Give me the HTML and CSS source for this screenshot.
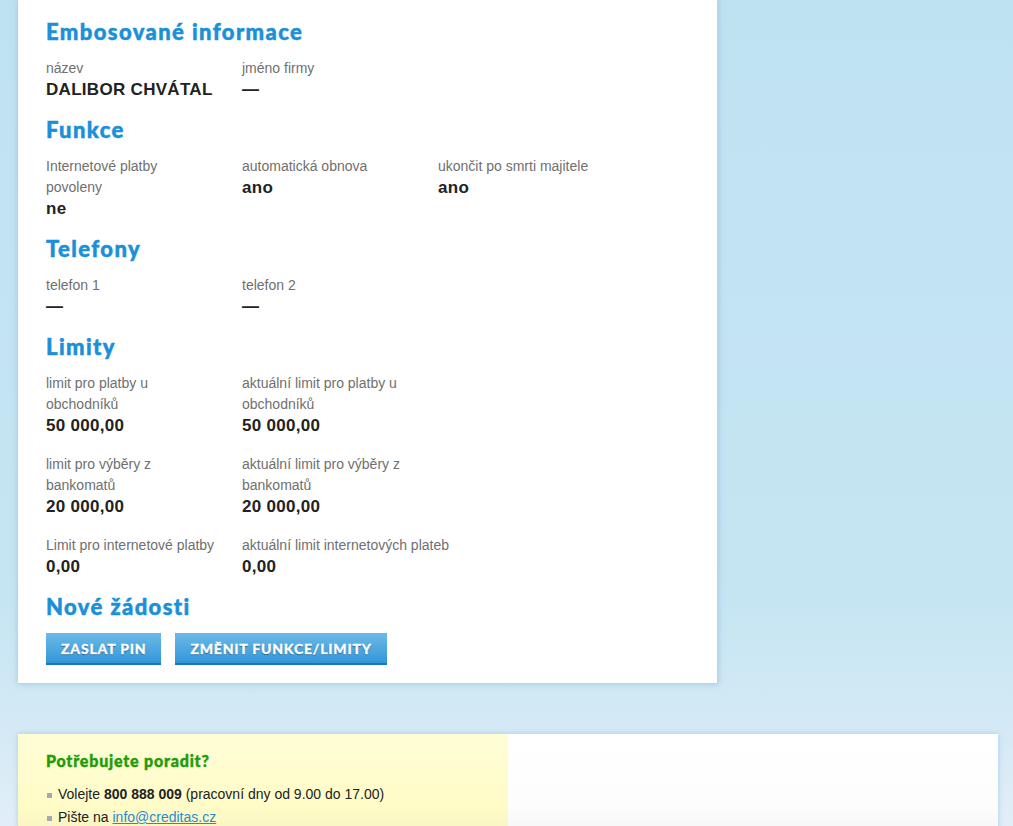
FILE: index.html
```html
<!DOCTYPE html>
<html lang="cs">
<head>
  <meta charset="UTF-8">
  <title>Detail karty</title>
  <link rel="stylesheet" href="styles.css">
</head>
<body>

  <div class="page">
    <!-- Detail karty -->
    <div class="card">
      <h2>Embosované informace</h2>
      <div class="fields">
        <div class="field">
          <div class="label">název</div>
          <div class="value">DALIBOR CHVÁTAL</div>
        </div>
        <div class="field">
          <div class="label">jméno firmy</div>
          <div class="value">—</div>
        </div>
      </div>

      <h2>Funkce</h2>
      <div class="fields">
        <div class="field">
          <div class="label">Internetové platby<br>povoleny</div>
          <div class="value">ne</div>
        </div>
        <div class="field">
          <div class="label">automatická obnova</div>
          <div class="value">ano</div>
        </div>
        <div class="field">
          <div class="label">ukončit po smrti majitele</div>
          <div class="value">ano</div>
        </div>
      </div>

      <h2>Telefony</h2>
      <div class="fields">
        <div class="field">
          <div class="label">telefon 1</div>
          <div class="value">—</div>
        </div>
        <div class="field">
          <div class="label">telefon 2</div>
          <div class="value">—</div>
        </div>
      </div>

      <h2>Limity</h2>
      <div class="fields">
        <div class="field">
          <div class="label">limit pro platby u<br>obchodníků</div>
          <div class="value">50 000,00</div>
        </div>
        <div class="field">
          <div class="label">aktuální limit pro platby u<br>obchodníků</div>
          <div class="value">50 000,00</div>
        </div>
        <div class="field break">
          <div class="label">limit pro výběry z<br>bankomatů</div>
          <div class="value">20 000,00</div>
        </div>
        <div class="field">
          <div class="label">aktuální limit pro výběry z<br>bankomatů</div>
          <div class="value">20 000,00</div>
        </div>
        <div class="field break">
          <div class="label">Limit pro internetové platby</div>
          <div class="value">0,00</div>
        </div>
        <div class="field">
          <div class="label">aktuální limit internetových plateb</div>
          <div class="value">0,00</div>
        </div>
      </div>

      <h2>Nové žádosti</h2>
      <div class="actions">
        <button class="btn">Zaslat PIN</button>
        <button class="btn">Změnit funkce/limity</button>
      </div>
    </div>

    <!-- Patička -->
    <div class="footer">
      <div class="help">
        <h3>Potřebujete poradit?</h3>
        <ul>
          <li>Volejte <strong>800 888 009</strong> (pracovní dny od 9.00 do 17.00)</li>
          <li>Pište na <a href="#">info@creditas.cz</a></li>
        </ul>
      </div>
      <div class="footer-rest"></div>
    </div>
  </div>

</body>
</html>
```

FILE: styles.css
```css
* {
  margin: 0;
  padding: 0;
  box-sizing: border-box;
}

body {
  font-family: "Liberation Sans", Arial, sans-serif;
  font-size: 14px;
  color: #222;
  background: linear-gradient(to bottom, #bfe2f1 0px, #c6e5f3 600px, #d6eaf6 740px, #e2eef7 826px);
  min-height: 826px;
}

.page {
  padding-left: 18px;
}

/* Card */
.card {
  width: 700px;
  background-color: white;
  padding: 18px 28px 18px;
  border-right: 1px solid #cfcfcf;
  border-bottom: 1px solid #cfcfcf;
  box-shadow: 0 0 6px rgba(120, 175, 210, 0.55);
}

.card h2 {
  font-family: Lato, "Open Sans", sans-serif;
  font-weight: 900;
  font-size: 22px;
  line-height: 28px;
  letter-spacing: 1.4px;
  color: #1a90d9;
  -webkit-text-stroke: 0.5px #1a90d9;
  margin-bottom: 12px;
}

.fields {
  display: grid;
  grid-template-columns: 196px 196px 196px;
  row-gap: 18px;
  margin-bottom: 16px;
}

.field.break {
  grid-column: 1;
}

.label {
  color: #707070;
  line-height: 21px;
  white-space: nowrap;
}

.value {
  font-weight: bold;
  font-size: 17px;
  line-height: 21px;
  letter-spacing: 0.3px;
  color: #222;
}

.actions {
  display: flex;
  gap: 14px;
}

.btn {
  font-family: Lato, "Open Sans", sans-serif;
  font-weight: 900;
  font-size: 14px;
  letter-spacing: 0.8px;
  text-transform: uppercase;
  color: white;
  -webkit-text-stroke: 0.3px white;
  text-shadow: 0 1px 1px rgba(0, 40, 80, 0.6);
  height: 32px;
  padding: 0 15px;
  border: none;
  border-bottom: 2px solid #1778b5;
  background: linear-gradient(to bottom, #6cb9e7, #3297d8);
  cursor: pointer;
}

/* Footer */
.footer {
  display: flex;
  width: 980px;
  height: 120px;
  margin-top: 50px;
  box-shadow: 0 0 5px rgba(120, 175, 210, 0.5);
}

.help {
  width: 490px;
  padding: 17px 28px;
  background: linear-gradient(to bottom, #fffdd6, #fffcc8 60%, #f3efc0);
}

.help h3 {
  font-family: Lato, "Open Sans", sans-serif;
  font-weight: 900;
  font-size: 16px;
  line-height: 20px;
  letter-spacing: 0.8px;
  color: #1f9c0b;
  -webkit-text-stroke: 0.4px #1f9c0b;
  margin-bottom: 12px;
}

.help ul {
  list-style: none;
}

.help li {
  line-height: 23px;
  padding-left: 12px;
  position: relative;
}

.help li::before {
  content: "";
  position: absolute;
  left: 1px;
  top: 10px;
  width: 5px;
  height: 5px;
  background-color: #a8a8a8;
}

.help a {
  color: #2a8ad0;
}

.footer-rest {
  flex: 1;
  background: linear-gradient(to bottom, #ffffff, #fdfdfd 60%, #f0f0f0);
}
```
